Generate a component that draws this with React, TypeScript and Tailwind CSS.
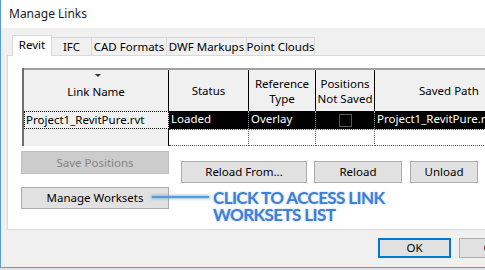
import React from 'react';

const tabs = [
  { label: 'IFC', w: 'w-[40px]' },
  { label: 'CAD Formats', w: 'w-[75px]' },
  { label: 'DWF Markups', w: 'w-[80px]' },
  { label: 'Point Clouds', w: 'w-[68px]' },
];

const App: React.FC = () => {
  return (
    <div className="w-[485px] h-[270px] overflow-hidden bg-[#dde3ea] font-['Noto_Sans',sans-serif] text-[11.5px] text-black">
      <div className="relative h-[268px] flex flex-col bg-[#f0f0f0] border-l border-b border-[#5b9bd5]">
        {/* Title bar */}
        <div className="h-[28px] shrink-0 bg-white flex items-center pl-[8px] text-[12px] text-[#1a1a1a]">
          Manage Links
        </div>

        {/* Tabs */}
        <div className="h-[27px] shrink-0 flex items-end pl-[11px] whitespace-nowrap">
          <div className="relative z-10 w-[40px] h-[21px] -mb-px bg-white border-t border-l border-r border-[#d9d9d9] flex items-center justify-center pb-[2px]">
            Revit
          </div>
          {tabs.map((t) => (
            <div
              key={t.label}
              className={`${t.w} h-[18px] border-t border-r border-[#d9d9d9] bg-[#f0f0f0] flex items-center justify-center`}
            >
              {t.label}
            </div>
          ))}
        </div>

        {/* Panel */}
        <div className="ml-[6px] w-[520px] h-[175px] shrink-0 bg-white border border-[#d9d9d9] flex flex-col">
          {/* Links grid */}
          <div className="ml-[14px] mt-[12px] border-l-2 border-[#6e6e6e] flex flex-col">
            <div className="flex h-[43px] border-t-2 border-[#a0a0a0] bg-[#f0f0f0] leading-[15px]">
              <div className="relative w-[145px] border-r border-black flex items-center justify-center pt-[2px]">
                <span className="absolute top-[4px] left-[71px] w-0 h-0 border-l-[3px] border-r-[3px] border-t-[3px] border-l-transparent border-r-transparent border-t-[#333]" />
                Link Name
              </div>
              <div className="w-[80px] border-r border-black flex items-center justify-center">Status</div>
              <div className="w-[67px] border-r border-black flex items-center justify-center text-center">
                Reference
                <br />
                Type
              </div>
              <div className="w-[59px] border-r border-black flex items-center justify-center text-center whitespace-nowrap">
                Positions
                <br />
                Not Saved
              </div>
              <div className="flex-1 flex items-center pl-[44px]">Saved Path</div>
            </div>

            <div className="flex h-[18px] leading-[16px]">
              <div className="w-[145px] bg-[#f0f0f0] border border-dotted border-black pl-[1px] whitespace-nowrap">
                Project1_RevitPure.rvt
              </div>
              <div className="w-[80px] bg-black text-white border-r border-dotted border-[#9a9a9a] pl-[2px]">Loaded</div>
              <div className="w-[67px] bg-black text-white border-r border-dotted border-[#9a9a9a] pl-[2px]">Overlay</div>
              <div className="w-[59px] bg-black border-r border-dotted border-[#9a9a9a] flex items-center justify-center">
                <span className="w-[13px] h-[13px] border border-[#5a5a5a]" />
              </div>
              <div className="flex-1 bg-black text-white pl-[2px] whitespace-nowrap">Project1_RevitPure.rvt</div>
            </div>

            <div className="flex h-[17px]">
              <div className="w-[145px] bg-[#f0f0f0] border-r border-black" />
              <div className="w-[80px] border-t border-b border-r border-dotted border-[#555]" />
              <div className="w-[67px] border-t border-b border-r border-dotted border-[#555]" />
              <div className="w-[59px] border-t border-b border-r border-dotted border-[#555]" />
              <div className="flex-1 border-t border-b border-dotted border-[#555]" />
            </div>
          </div>

          {/* Buttons */}
          <div className="flex mt-[5px] ml-[13px]">
            <div className="flex flex-col gap-[13px]">
              <div className="w-[148px] h-[23px] bg-[#cccccc] border border-[#bfbfbf] text-[#838383] flex items-center justify-center">
                Save Positions
              </div>
              <div className="w-[148px] h-[22px] bg-[#e1e1e1] border border-[#adadad] flex items-center justify-center">
                Manage Worksets
              </div>
            </div>
            <div className="flex ml-[12px] mt-[10px] h-[22px]">
              <div className="w-[126px] bg-[#e1e1e1] border border-[#adadad] flex items-center justify-center">
                Reload From...
              </div>
              <div className="w-[88px] ml-[7px] bg-[#e1e1e1] border border-[#adadad] flex items-center justify-center">
                Reload
              </div>
              <div className="w-[68px] ml-[8px] bg-[#e1e1e1] border border-[#adadad] flex items-center justify-center">
                Unload
              </div>
            </div>
          </div>
        </div>

        {/* Dialog buttons */}
        <div className="flex mt-[8px] ml-[377px]">
          <div className="w-[73px] h-[20px] shrink-0 bg-[#e1e1e1] border-2 border-[#0078d7] flex items-center justify-center">OK</div>
          <div className="w-[85px] h-[20px] shrink-0 ml-[8px] bg-[#e1e1e1] border border-[#adadad] flex items-center justify-center">
            Cancel
          </div>
        </div>

        {/* Annotation */}
        <div className="absolute left-[151px] top-[196px] w-[57px] h-[2px] bg-[#5b9bd5] shadow-[0_0_3px_1px_rgba(91,155,213,0.6)]" />
        <div className="absolute left-[212px] top-[189px] font-['Lato',sans-serif] font-bold text-[17px] leading-[17px] tracking-[-0.6px] text-[#3d7fd9] [text-shadow:0_0_2px_rgba(61,127,217,0.45)] whitespace-nowrap">
          CLICK TO ACCESS LINK
          <br />
          WORKSETS LIST
        </div>
      </div>
    </div>
  );
};

export default App;
